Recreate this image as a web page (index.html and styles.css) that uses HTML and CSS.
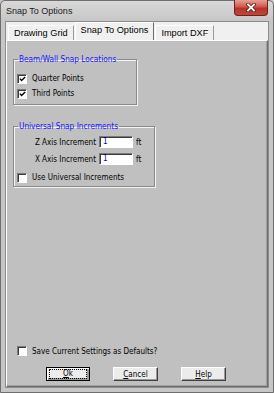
FILE: index.html
```html
<html>
<head>
    <link rel="stylesheet" href="styles.css">
</head>
<body>
    <div class="window">
        <div class="titlebar">
            <span class="title">Snap To Options</span>
            <div class="close">
                <svg width="10" height="9" viewBox="0 0 10 9">
                    <path d="M2 1.5L8 7.5M8 1.5L2 7.5" stroke="#5a1a16" stroke-width="3.4" stroke-linecap="square"/>
                    <path d="M2 1.5L8 7.5M8 1.5L2 7.5" stroke="#ffffff" stroke-width="1.8" stroke-linecap="square"/>
                </svg>
            </div>
        </div>
        <div class="client">
            <div class="tabs">
                <div class="tab">Drawing Grid</div>
                <div class="tab active">Snap To Options</div>
                <div class="tab">Import DXF</div>
            </div>
            <div class="page">
                <fieldset class="group group-beam">
                    <legend>Beam/Wall Snap Locations</legend>
                    <div class="check">
                        <span class="box"><svg width="8" height="8" viewBox="0 0 8 8"><path d="M1 3.6L3 5.8L7 1.6" fill="none" stroke="#000" stroke-width="1.6"/></svg></span>
                        Quarter Points
                    </div>
                    <div class="check">
                        <span class="box"><svg width="8" height="8" viewBox="0 0 8 8"><path d="M1 3.6L3 5.8L7 1.6" fill="none" stroke="#000" stroke-width="1.6"/></svg></span>
                        Third Points
                    </div>
                </fieldset>
                <fieldset class="group group-snap">
                    <legend>Universal Snap Increments</legend>
                    <div class="fields">
                        <span class="field-label">Z Axis Increment</span>
                        <span class="input">1</span>
                        <span class="unit">ft</span>
                        <span class="field-label">X Axis Increment</span>
                        <span class="input">1</span>
                        <span class="unit">ft</span>
                    </div>
                    <div class="check check-use">
                        <span class="box"></span>
                        Use Universal Increments
                    </div>
                </fieldset>
                <div class="spacer"></div>
                <div class="check check-save">
                    <span class="box"></span>
                    Save Current Settings as Defaults?
                </div>
                <div class="buttons">
                    <div class="btn btn-default"><span class="focus"><u>O</u>k</span></div>
                    <div class="btn"><span><u>C</u>ancel</span></div>
                    <div class="btn"><span><u>H</u>elp</span></div>
                </div>
            </div>
        </div>
    </div>
</body>
</html>
```

FILE: styles.css
```css
html, body {
    margin: 0px;
    width: 274px;
    height: 393px;
    overflow: hidden;
}
body {
    font-family: "DejaVu Sans Condensed", "Liberation Sans", Arial, sans-serif;
    font-size: 8px;
    color: #000;
    background: #c6c6c6;
}
.window {
    box-sizing: border-box;
    width: 274px;
    height: 393px;
    display: flex;
    flex-direction: column;
    border: 1px solid #6e6e6e;
    border-radius: 5px 5px 0 0;
    background: linear-gradient(#d9d9d9, #c6c6c6 20px);
}
.titlebar {
    height: 20px;
    display: flex;
    justify-content: space-between;
    align-items: flex-start;
    padding: 0 5px 0 5px;
}
.title {
    font-family: "Liberation Sans", Arial, sans-serif;
    font-size: 9px;
    line-height: 21px;
    color: #1a1a1a;
}
.close {
    box-sizing: border-box;
    width: 34px;
    height: 16px;
    margin-top: -1px;
    display: flex;
    align-items: center;
    justify-content: center;
    border: 1px solid #6b231d;
    border-top: none;
    border-radius: 0 0 4px 4px;
    background: linear-gradient(#e6a194, #d0594c 45%, #b8322a 55%, #c4453a);
}
.client {
    flex: 1;
    display: flex;
    flex-direction: column;
    margin: 0 4px 4px 4px;
    border: 1px solid #8c8c8c;
    background: #f0f0f0;
}
.tabs {
    height: 18px;
    display: flex;
    align-items: flex-end;
    padding-left: 2px;
}
.tab {
    box-sizing: border-box;
    height: 15px;
    padding: 0 5px;
    font-family: "Liberation Sans", Arial, sans-serif;
    font-size: 9.2px;
    line-height: 15px;
    border-top: 1px solid #ffffff;
    border-left: 1px solid #ffffff;
    border-right: 1px solid #9a9a9a;
}
.tab.active {
    height: 18px;
    padding: 0 5px 0 5px;
    margin: 0 1px;
    line-height: 15px;
    border-right: 1px solid #6e6e6e;
    position: relative;
    z-index: 1;
    background: #f0f0f0;
}
.page {
    flex: 1;
    display: flex;
    flex-direction: column;
    background: #c0c0c0;
    border: 1px solid;
    border-color: #ffffff #6e6e6e #6e6e6e #ffffff;
    box-shadow: inset -1px -1px 0 #a0a0a0;
}
.group {
    box-sizing: border-box;
    margin: 13px 0 0 6px;
    padding: 7px 3px 3px 3px;
    border: 1px solid #8a8a8a;
    box-shadow: inset 1px 1px 0 #f4f4f4, 1px 1px 0 #f4f4f4;
}
.group legend {
    margin-left: 1px;
    padding: 0 1px;
    font-size: 8.2px;
    line-height: 10px;
    color: #1414ff;
}
.group-beam {
    width: 124px;
}
.group-snap {
    width: 142px;
    margin-top: 16px;
    padding: 3px 3px 1px 3px;
}
.check {
    height: 15px;
    display: flex;
    align-items: center;
    gap: 5px;
}
.box {
    box-sizing: border-box;
    width: 10px;
    height: 10px;
    display: flex;
    align-items: center;
    justify-content: center;
    background: #ffffff;
    border: 1px solid;
    border-color: #7a7a7a #ffffff #ffffff #7a7a7a;
    box-shadow: inset 1px 1px 0 #3c3c3c;
}
.box svg {
    margin: 1px 0 0 1px;
}
.fields {
    display: grid;
    grid-template-columns: 79px 34px auto;
    grid-auto-rows: 16px;
    column-gap: 3px;
    row-gap: 1px;
    align-items: center;
}
.field-label {
    text-align: right;
}
.input {
    box-sizing: border-box;
    height: 12px;
    padding-left: 3px;
    line-height: 10px;
    color: #0000b0;
    background: #ffffff;
    border: 1px solid;
    border-color: #7a7a7a #ffffff #ffffff #7a7a7a;
    box-shadow: inset 1px 1px 0 #3c3c3c;
}
.check-use {
    margin-top: 3px;
}
.spacer {
    flex: 1;
}
.check-save {
    padding-left: 10px;
    height: 14px;
}
.buttons {
    display: flex;
    gap: 23px;
    padding-left: 39px;
    margin: 9px 0 5px 0;
}
.btn {
    box-sizing: border-box;
    width: 45px;
    height: 14px;
    display: flex;
    align-items: center;
    justify-content: center;
    background: #ececec;
    border: 1px solid;
    border-color: #ffffff #404040 #404040 #ffffff;
    box-shadow: inset -1px -1px 0 #9a9a9a;
}
.btn-default {
    width: 44px;
    border: 1px solid #000000;
    box-shadow: inset 1px 1px 0 #ffffff, inset -2px -2px 0 #9a9a9a;
}
.btn span {
    line-height: 9px;
}
.btn .focus {
    box-sizing: border-box;
    width: 36px;
    height: 8px;
    outline: 1px dotted #000000;
    text-align: center;
    line-height: 8px;
}
```
